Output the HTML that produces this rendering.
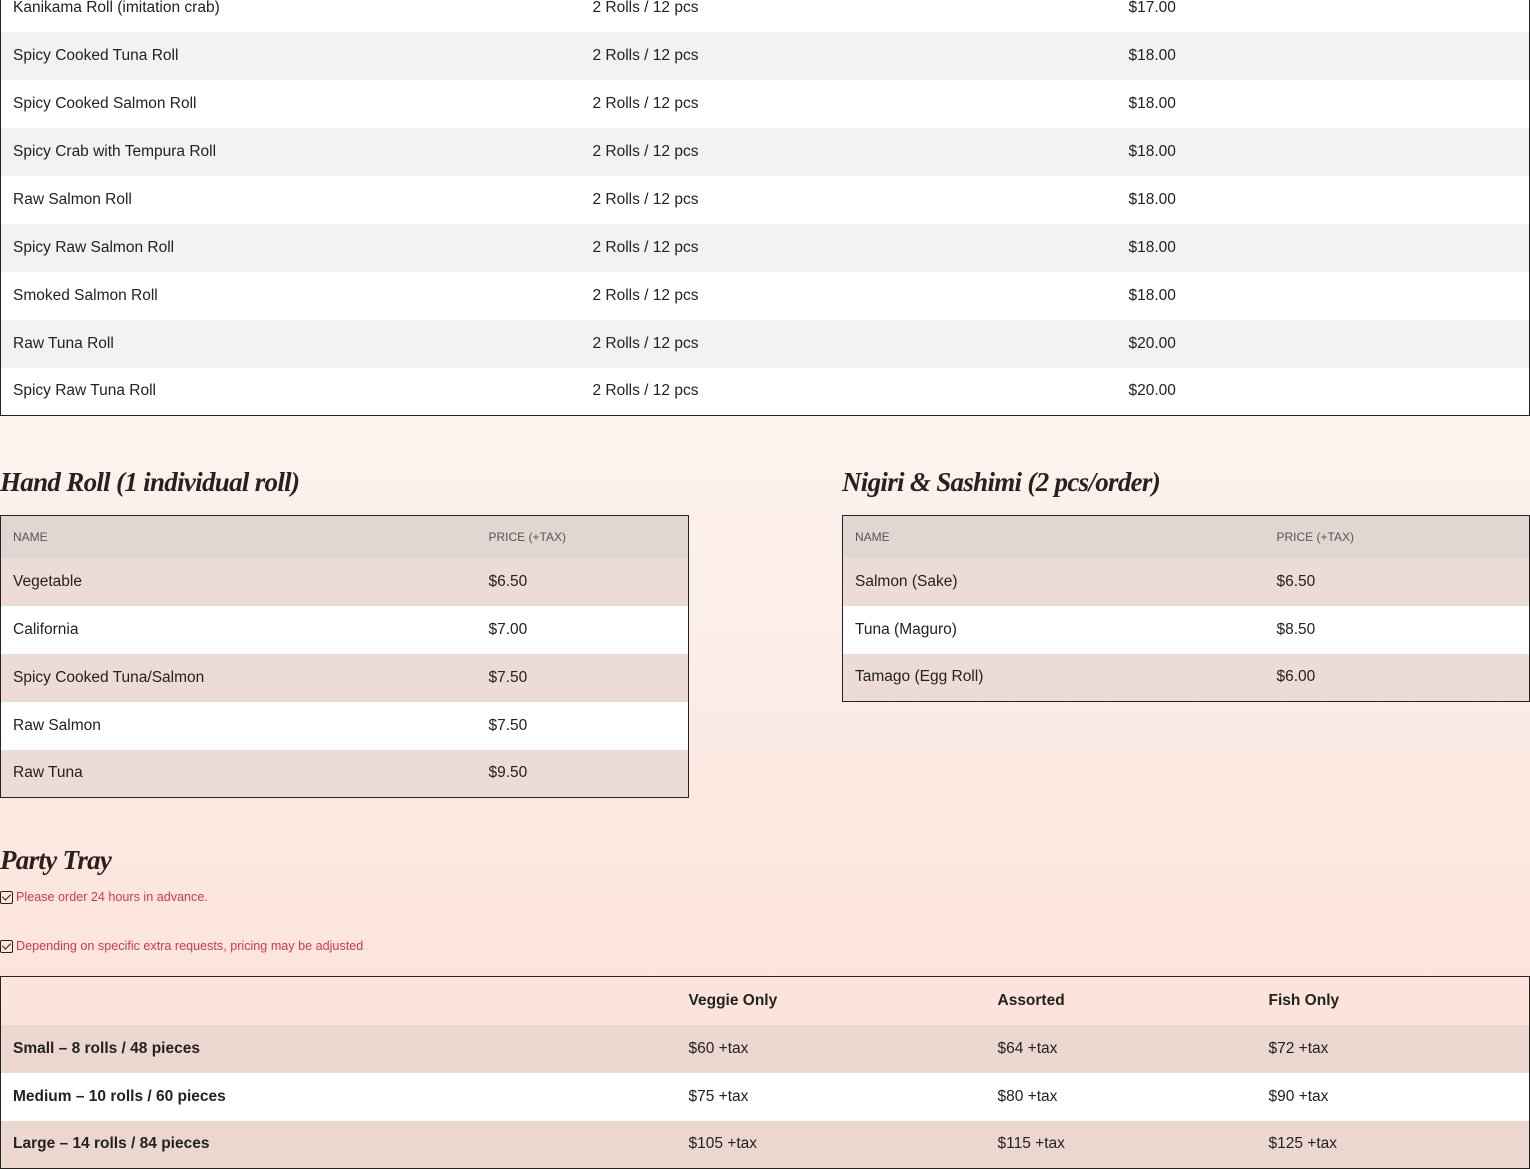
<!DOCTYPE html>
<html><head><meta charset="utf-8"><style>
*{margin:0;padding:0;box-sizing:border-box}
body{width:1530px;height:1147px;overflow:hidden;font-family:"Liberation Sans",sans-serif;color:#222;
background:linear-gradient(#fff 0,#fdf3ef 417px,#fbe0d6 1147px);position:relative}
table{border-collapse:collapse;border:1px solid #222;position:absolute;font-size:15.5px}
td{height:48px;padding:0 12px;vertical-align:middle}
.top{left:0;top:-17px;width:1530px;background:#fff}
.top tr:nth-child(even) td{background:#f2f2f2}
h2{position:absolute;font-family:"Liberation Serif",serif;font-style:italic;font-weight:bold;font-size:27px;color:#2a2020;letter-spacing:-0.7px}
.hd td{height:42px;font-size:12px;color:#555;background:#e2d6d2}
.s tr.o td{background:#ecdcd5}
.s tr.w td{background:#fff}
.note{position:absolute;left:0;font-size:12.6px;color:#d33a48;display:flex;align-items:center;gap:3px}
.cb{width:13px;height:13px;border:1.5px solid #222;border-radius:2px;position:relative;display:inline-block}
.cb:after{content:"";position:absolute;left:3px;top:0px;width:4px;height:7px;border:solid #222;border-width:0 1.5px 1.5px 0;transform:rotate(45deg)}
.pt{left:0;top:976px;width:1530px}
.pt td:first-child{font-weight:bold}
.pt tr.o td{background:#ebd7cf}
.pt tr.w td{background:#fff}
.pt tr.h td{font-weight:bold}
</style></head><body>
<table class="top">
<colgroup><col style="width:580px"><col style="width:536px"><col></colgroup>
<tr><td>Kanikama Roll (imitation crab)</td><td>2 Rolls / 12 pcs</td><td>$17.00</td></tr>
<tr><td>Spicy Cooked Tuna Roll</td><td>2 Rolls / 12 pcs</td><td>$18.00</td></tr>
<tr><td>Spicy Cooked Salmon Roll</td><td>2 Rolls / 12 pcs</td><td>$18.00</td></tr>
<tr><td>Spicy Crab with Tempura Roll</td><td>2 Rolls / 12 pcs</td><td>$18.00</td></tr>
<tr><td>Raw Salmon Roll</td><td>2 Rolls / 12 pcs</td><td>$18.00</td></tr>
<tr><td>Spicy Raw Salmon Roll</td><td>2 Rolls / 12 pcs</td><td>$18.00</td></tr>
<tr><td>Smoked Salmon Roll</td><td>2 Rolls / 12 pcs</td><td>$18.00</td></tr>
<tr><td>Raw Tuna Roll</td><td>2 Rolls / 12 pcs</td><td>$20.00</td></tr>
<tr><td>Spicy Raw Tuna Roll</td><td>2 Rolls / 12 pcs</td><td>$20.00</td></tr>
</table>
<h2 style="left:0;top:467px">Hand Roll (1 individual roll)</h2>
<h2 style="left:842px;top:467px">Nigiri &amp; Sashimi (2 pcs/order)</h2>
<table class="s" style="left:0;top:515px;width:689px">
<colgroup><col style="width:476px"><col></colgroup>
<tr class="hd"><td>NAME</td><td>PRICE (+TAX)</td></tr>
<tr class="o"><td>Vegetable</td><td>$6.50</td></tr>
<tr class="w"><td>California</td><td>$7.00</td></tr>
<tr class="o"><td>Spicy Cooked Tuna/Salmon</td><td>$7.50</td></tr>
<tr class="w"><td>Raw Salmon</td><td>$7.50</td></tr>
<tr class="o"><td>Raw Tuna</td><td>$9.50</td></tr>
</table>
<table class="s" style="left:842px;top:515px;width:688px">
<colgroup><col style="width:422px"><col></colgroup>
<tr class="hd"><td>NAME</td><td>PRICE (+TAX)</td></tr>
<tr class="o"><td>Salmon (Sake)</td><td>$6.50</td></tr>
<tr class="w"><td>Tuna (Maguro)</td><td>$8.50</td></tr>
<tr class="o"><td>Tamago (Egg Roll)</td><td>$6.00</td></tr>
</table>
<h2 style="left:0;top:845px">Party Tray</h2>
<div class="note" style="top:890px"><span class="cb"></span>Please order 24 hours in advance.</div>
<div class="note" style="top:939px"><span class="cb"></span>Depending on specific extra requests, pricing may be adjusted</div>
<table class="pt">
<colgroup><col style="width:676px"><col style="width:309px"><col style="width:271px"><col></colgroup>
<tr class="h"><td></td><td>Veggie Only</td><td>Assorted</td><td>Fish Only</td></tr>
<tr class="o"><td>Small – 8 rolls / 48 pieces</td><td>$60 +tax</td><td>$64 +tax</td><td>$72 +tax</td></tr>
<tr class="w"><td>Medium – 10 rolls / 60 pieces</td><td>$75 +tax</td><td>$80 +tax</td><td>$90 +tax</td></tr>
<tr class="o"><td>Large – 14 rolls / 84 pieces</td><td>$105 +tax</td><td>$115 +tax</td><td>$125 +tax</td></tr>
</table>
</body></html>
